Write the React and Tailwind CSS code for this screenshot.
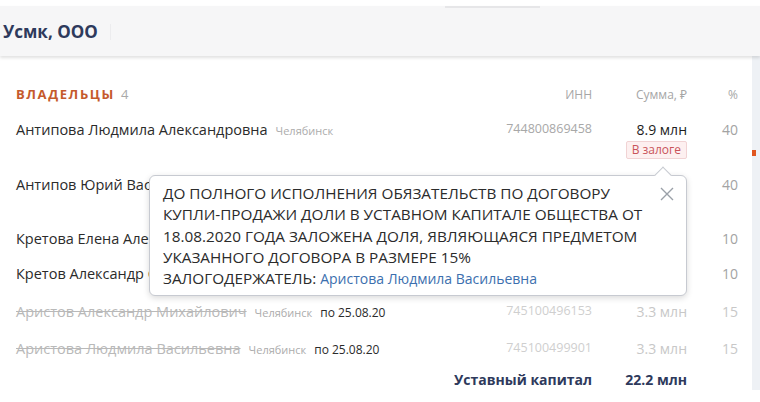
import React from 'react';

const FONT = { fontFamily: '"Open Sans", "Noto Sans", sans-serif' };

const ROWS = [
  { name: 'Антипова Людмила Александровна', city: 'Челябинск', inn: '744800869458', sum: '8.9 млн', pct: '40', pledge: true, h: 'h-[55px]' },
  { name: 'Антипов Юрий Васильевич', city: 'Челябинск', inn: '744800869460', sum: '8.9 млн', pct: '40', pledge: true, h: 'h-[54px]' },
  { name: 'Кретова Елена Александровна', city: 'Челябинск', inn: '744800869471', sum: '2.2 млн', pct: '10', h: 'h-[35px]' },
  { name: 'Кретов Александр Сергеевич', city: 'Челябинск', inn: '744800869482', sum: '2.2 млн', pct: '10', h: 'h-[38px]' },
  { name: 'Аристов Александр Михайлович', city: 'Челябинск', inn: '745100496153', sum: '3.3 млн', pct: '15', until: 'по 25.08.20', h: 'h-[37px]' },
  { name: 'Аристова Людмила Васильевна', city: 'Челябинск', inn: '745100499901', sum: '3.3 млн', pct: '15', until: 'по 25.08.20', h: 'h-[31px]' },
];

function Row({ row }) {
  const old = !!row.until;
  return (
    <div className={`flex items-start ${row.h}`}>
      <div className="flex-1 flex items-baseline gap-[8px] min-w-0">
        <span className={`text-[14.5px] ${old ? 'text-[#b9b9b9] line-through' : 'text-[#2b2b2b]'}`}>{row.name}</span>
        <span className="text-[11px] text-[#acacac]">{row.city}</span>
        {old && <span className="text-[12px] text-[#2b2b2b]">{row.until}</span>}
      </div>
      <div className={`w-[130px] text-right text-[12.5px] pt-[1px] ${old ? 'text-[#cfcfcf]' : 'text-[#a8a8a8]'}`}>{row.inn}</div>
      <div className="w-[95px] flex flex-col items-end">
        <span className={`text-[14px] ${old ? 'text-[#c8c8c8]' : 'text-[#1e1e1e]'}`}>{row.sum}</span>
        {row.pledge && (
          <span className="mt-[1px] px-[5px] h-[18px] leading-[16px] text-[12px] text-[#c9545a] bg-[#fdf0f0] border border-[#f1d3d4] rounded-[2px]">
            В залоге
          </span>
        )}
      </div>
      <div className={`w-[51px] text-right text-[14px] ${old ? 'text-[#c8c8c8]' : 'text-[#a3a3a3]'}`}>{row.pct}</div>
    </div>
  );
}

export default function App() {
  return (
    <div className="w-[760px] h-[402px] overflow-hidden bg-white relative" style={FONT}>
      <div className="h-[50px] bg-[#f6f6f7] shadow-[0_2px_3px_rgba(0,0,0,0.12)] relative z-10">
        <div className="ml-[445px] mt-[6px] w-[95px] h-[2px] bg-[#e6e6e8]" />
        <div className="flex items-center h-[42px] pt-[6px]">
          <span className="pl-[3px] text-[17px] font-bold text-[#2e3a5c]">Усмк, ООО</span>
          <span className="ml-[12px] w-px h-[16px] bg-[#ececee]" />
        </div>
      </div>
      <div className="flex">
        <div className="w-[752px] pl-[16px] pr-[14px]">
          <div className="flex items-center h-[38px] mt-[20px] mb-[5px]">
            <div className="flex-1 flex items-baseline gap-[6px]">
              <span className="text-[13px] font-bold tracking-[1.6px] text-[#c55a2c]">ВЛАДЕЛЬЦЫ</span>
              <span className="text-[13px] text-[#a9a9a9]">4</span>
            </div>
            <div className="w-[130px] text-right text-[12px] text-[#a6a6a6]">ИНН</div>
            <div className="w-[95px] text-right text-[12px] text-[#a6a6a6]">Сумма, ₽</div>
            <div className="w-[51px] text-right text-[12px] text-[#a6a6a6]">%</div>
          </div>
          <div>
            {ROWS.map((r) => (
              <Row key={r.inn} row={r} />
            ))}
          </div>
          <div className="flex items-center">
            <div className="flex-1" />
            <div className="text-right text-[14px] font-bold text-[#2e3a5c]">Уставный капитал</div>
            <div className="w-[95px] text-right text-[14px] font-bold text-[#2e3a5c]">22.2 млн</div>
            <div className="w-[51px]" />
          </div>
        </div>
        <div className="flex-1 bg-[#eef1f5] pt-[94px]">
          <div className="w-[4px] h-[6px] bg-[#e0561f]" />
        </div>
      </div>

      <div className="absolute left-[149px] top-[175px] w-[538px] h-[121px] bg-white border border-[#c7cad1] rounded-[6px] shadow-[0_2px_6px_rgba(0,0,0,0.15)] pl-[13px] pr-[36px] pt-[7px] z-20">
        <div className="absolute -top-[7px] right-[17px] w-[12px] h-[12px] bg-white border-l border-t border-[#c7cad1] rotate-45" />
        <button className="absolute right-[11px] top-[10px] w-[16px] h-[16px] text-[#9aa0a8]">
          <svg viewBox="0 0 16 16" width="16" height="16" fill="none" stroke="currentColor" strokeWidth="1.4">
            <path d="M2 2L14 14M14 2L2 14" />
          </svg>
        </button>
        <p className="text-[15.3px] leading-[21.3px] text-[#2b2b2b] relative whitespace-nowrap">
          ДО ПОЛНОГО ИСПОЛНЕНИЯ ОБЯЗАТЕЛЬСТВ ПО ДОГОВОРУ<br />
          КУПЛИ-ПРОДАЖИ ДОЛИ В УСТАВНОМ КАПИТАЛЕ ОБЩЕСТВА ОТ<br />
          18.08.2020 ГОДА ЗАЛОЖЕНА ДОЛЯ, ЯВЛЯЮЩАЯСЯ ПРЕДМЕТОМ<br />
          УКАЗАННОГО ДОГОВОРА В РАЗМЕРЕ 15%<br />
          ЗАЛОГОДЕРЖАТЕЛЬ: <span className="text-[14px] text-[#3c6fae]">Аристова Людмила Васильевна</span>
        </p>
      </div>
    </div>
  );
}
